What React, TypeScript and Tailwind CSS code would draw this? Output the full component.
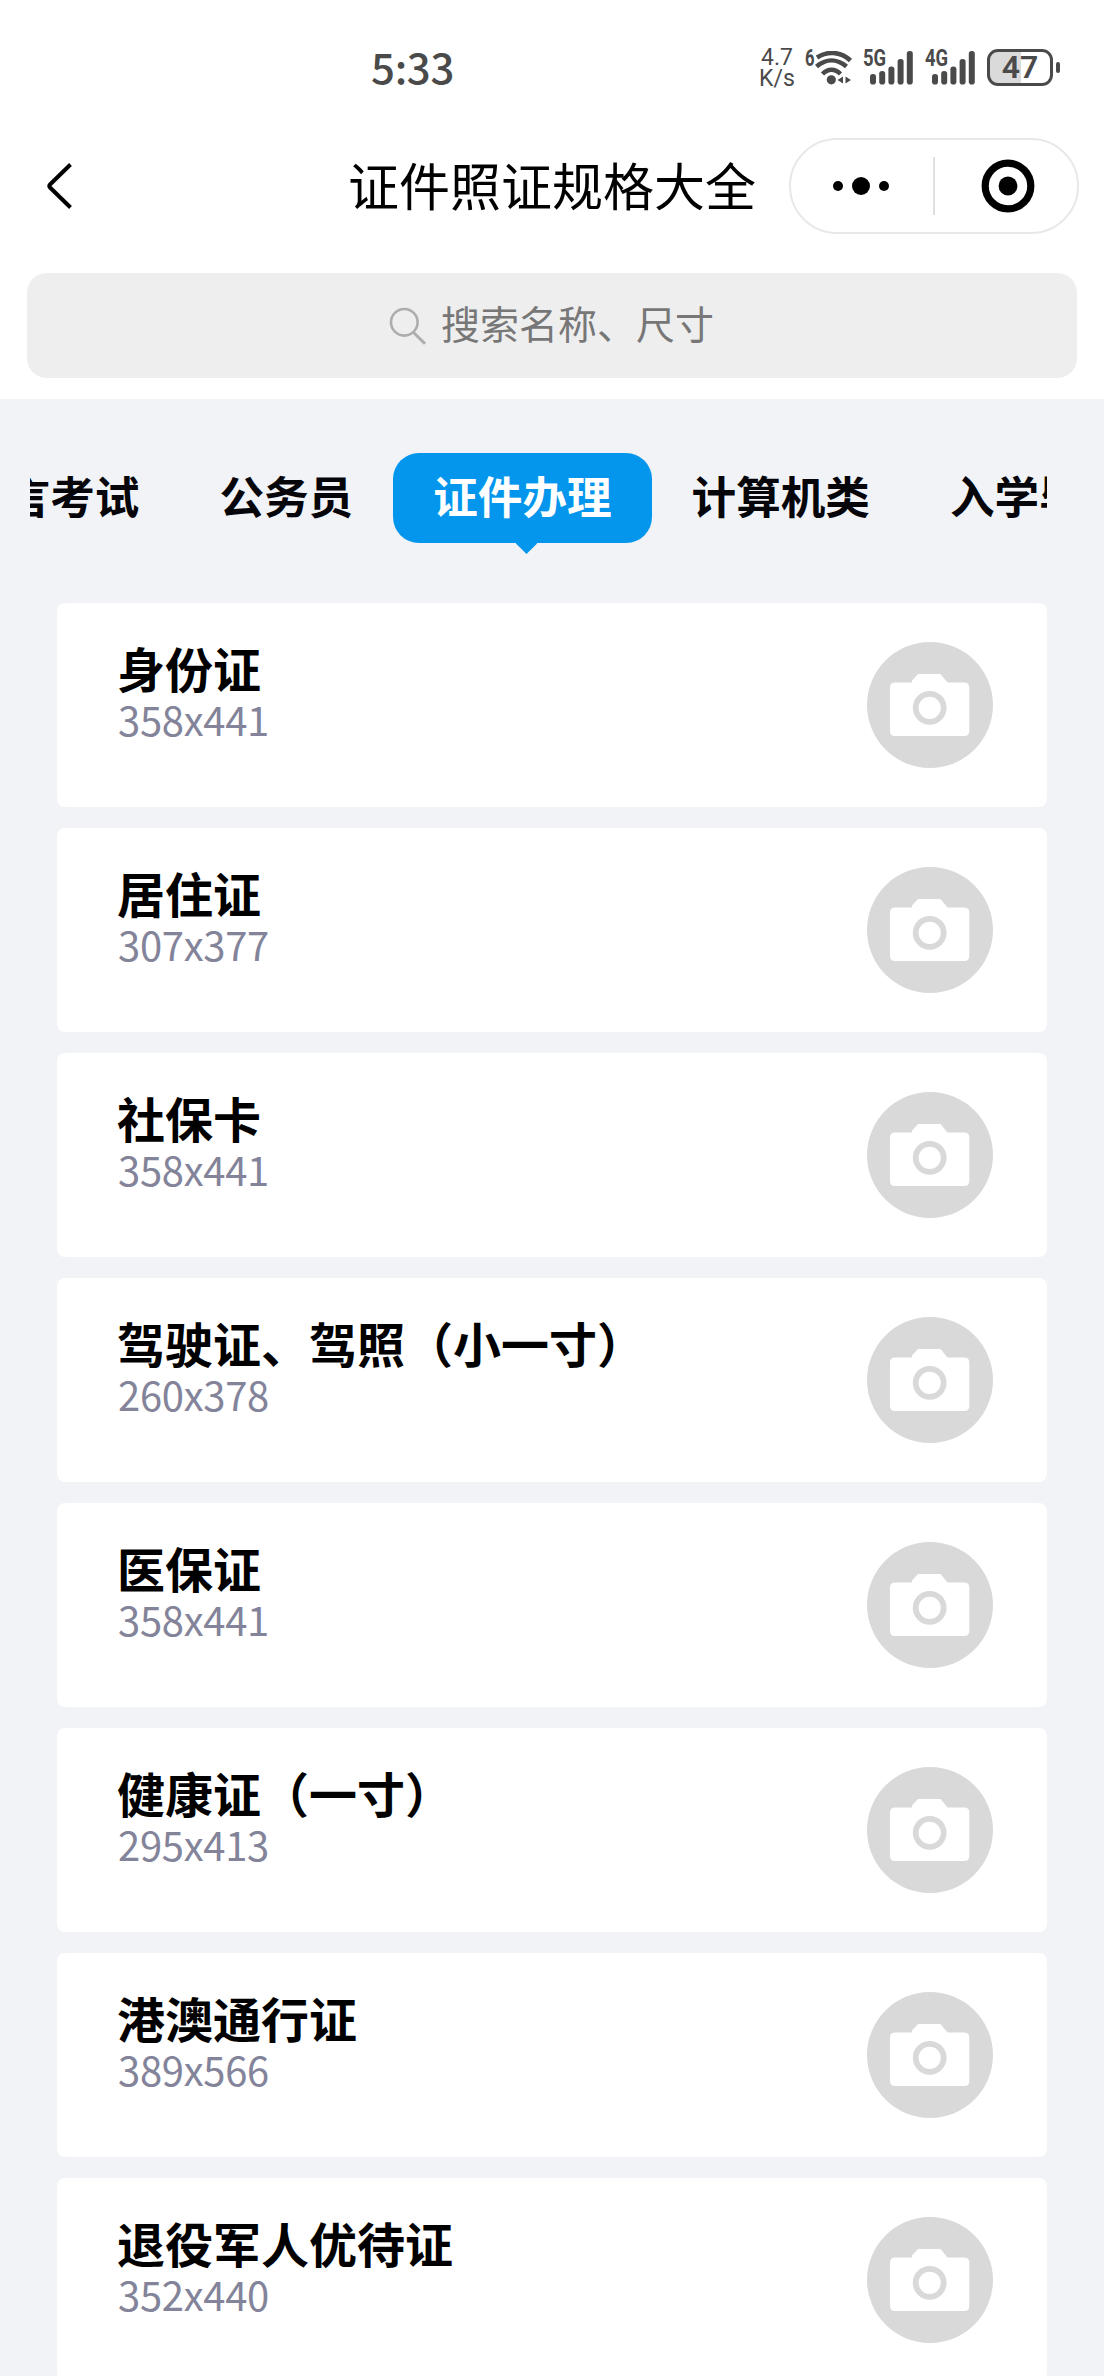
import clsx from 'clsx';

const tabs = ['语言考试', '公务员', '证件办理', '计算机类', '入学毕业'];
const activeTab = '证件办理';

const specs = [
  { name: '身份证', size: '358x441' },
  { name: '居住证', size: '307x377' },
  { name: '社保卡', size: '358x441' },
  { name: '驾驶证、驾照（小一寸）', size: '260x378' },
  { name: '医保证', size: '358x441' },
  { name: '健康证（一寸）', size: '295x413' },
  { name: '港澳通行证', size: '389x566' },
  { name: '退役军人优待证', size: '352x440' },
];

function WifiIcon() {
  return (
    <div className="relative ml-[13px] h-[34px] w-[48px]">
      <span className="absolute -top-px left-0 origin-left scale-x-[0.72] font-[family-name:Roboto] text-[23px] leading-[18px] font-bold">6</span>
      <svg className="absolute top-0 left-[10px]" width="38" height="34" viewBox="0 0 38 34" fill="none">
        <path d="M2 6.500C12 0 25 0 35.500 9.500" stroke="#4a4a4a" strokeWidth="4.600" />
        <path d="M1.500 15.500C11 7.500 22 7.500 31.500 15.500" stroke="#4a4a4a" strokeWidth="4.600" />
        <path d="M7.500 23C13 17.300 20 17.300 25.500 23" stroke="#4a4a4a" strokeWidth="4.600" />
        <circle cx="16.300" cy="28.800" r="4.600" fill="#4a4a4a" />
        <path d="M28 25.500V32.500L22.500 29ZM30.500 25.500V32.500L36 29Z" fill="#4a4a4a" />
      </svg>
    </div>
  );
}

function SignalIcon({ label, className }: { label: string; className?: string }) {
  return (
    <div className={clsx('relative h-[34px] w-[50px]', className)}>
      <span className="absolute -top-px left-0 origin-left scale-x-[0.8] font-[family-name:Roboto] text-[23px] leading-[18px] font-bold">{label}</span>
      <svg className="absolute top-0 left-[7px]" width="43" height="34" viewBox="0 0 43 34" fill="#4a4a4a">
        <rect x="0" y="23" width="6" height="10.500" rx="2.800" />
        <rect x="9.200" y="20" width="6" height="13.500" rx="2.800" />
        <rect x="18.400" y="15.500" width="6" height="18" rx="2.800" />
        <rect x="27.600" y="8" width="6" height="25.500" rx="2.800" />
        <rect x="36.800" y="0" width="6" height="33.500" rx="2.800" />
      </svg>
    </div>
  );
}

function StatusBar() {
  return (
    <div className="flex h-[110px] items-start text-[#4a4a4a]">
      <span className="mt-[44px] ml-[371px] w-[389px] text-[42px] leading-[44px] font-medium tracking-[-0.3px]">5:33</span>
      <div className="mt-[48px] w-[35px] font-[family-name:Roboto] text-[23px] leading-[20.500px]">
        <div className="pl-px">4.7</div>
        <div className="-ml-px">K/s</div>
      </div>
      <div className="mt-[51px] -ml-[3px] flex">
        <WifiIcon />
        <SignalIcon label="5G" className="ml-[10px]" />
        <SignalIcon label="4G" className="ml-[12px]" />
      </div>
      <div className="mt-[49px] ml-[12px] flex items-center">
        <div className="flex h-[37px] w-[66px] items-center justify-center rounded-[11px] border-[3px] border-[#4a4a4a] bg-linear-to-r from-[#dadada] from-52% to-white to-52% pb-px font-[family-name:Roboto] text-[32px] leading-none font-semibold">
          47
        </div>
        <div className="ml-[3px] h-[11px] w-[4px] rounded-full bg-[#4a4a4a]" />
      </div>
    </div>
  );
}

function NavBar() {
  return (
    <div className="flex h-[163px] items-start">
      <svg className="mt-[52px] ml-[46px]" width="28" height="48" viewBox="0 0 28 48" fill="none" stroke="black" strokeWidth="4">
        <path d="M24.500 2.500L4 22.500Q2.500 24 4 25.500L24.500 45.500" />
      </svg>
      <h1 className="mt-[44px] ml-[274px] w-[441px] text-[51px] leading-[60px] whitespace-nowrap">证件照证规格大全</h1>
      <div className="mt-[28px] flex h-[96px] w-[290px] items-center rounded-full border-2 border-[#e8e8e8]">
        <svg className="ml-[42px]" width="56" height="20" viewBox="0 0 56 20">
          <circle cx="5" cy="10" r="5" />
          <circle cx="28" cy="10" r="9" />
          <circle cx="51" cy="10" r="5" />
        </svg>
        <div className="ml-[44px] h-[58px] w-[2px] bg-[#e0e0e0]" />
        <svg className="ml-[46px]" width="54" height="54" viewBox="0 0 54 54">
          <circle cx="27" cy="27" r="22.800" fill="none" stroke="black" strokeWidth="7.200" />
          <circle cx="27" cy="27" r="9.400" />
        </svg>
      </div>
    </div>
  );
}

function SearchBox() {
  return (
    <div className="mx-[27px] flex h-[105px] items-center rounded-[20px] bg-[#eeeeee]">
      <svg className="ml-[362px]" width="38" height="38" viewBox="0 0 38 38" fill="none" stroke="#adadad" strokeWidth="2.600">
        <circle cx="15.300" cy="15.300" r="13.300" />
        <path d="M24.500 25.500L36 36.800" strokeWidth="3" />
      </svg>
      <span className="-mt-[8px] ml-[14px] text-[39px] leading-[50px] text-[#777777]">搜索名称、尺寸</span>
    </div>
  );
}

function Tabs() {
  return (
    <div className="mx-[30px] mt-[54px] flex h-[102px] w-[1017px] shrink-0 overflow-hidden">
      {tabs.map((tab, i) => (
        <div
          key={tab}
          className={clsx(
            'relative flex h-[90px] shrink-0 items-center rounded-[26px] px-[40px] text-[44.6px] leading-none font-bold',
            i === 0 && '-ml-[109px]',
            tab === activeTab ? 'bg-[#0396ec] text-white' : 'text-[#05050a]',
          )}
        >
          <span className="-mt-[5px]">{tab}</span>
          {tab === activeTab && (
            <div className="absolute -bottom-[8px] left-[126px] h-[15px] w-[15px] rotate-45 bg-[#0396ec]" />
          )}
        </div>
      ))}
    </div>
  );
}

function CameraIcon() {
  return (
    <svg width="126" height="126" viewBox="0 0 126 126">
      <circle cx="63" cy="63" r="63" fill="#d9d9d9" />
      <path
        d="M28 40.500H45V38.500L51 32H73.500L80.500 40.500H97Q102.300 40.500 102.300 45.500V89Q102.300 94 97.300 94H28Q23 94 23 89V45.500Q23 40.500 28 40.500Z"
        fill="white"
      />
      <circle cx="62.700" cy="65.800" r="14" fill="none" stroke="#d9d9d9" strokeWidth="5.800" />
    </svg>
  );
}

function SpecCard({ name, size }: { name: string; size: string }) {
  return (
    <div className="flex h-[204px] shrink-0 items-start justify-between rounded-[8px] bg-white pr-[54px] pl-[60px]">
      <div className="pt-[35px]">
        <div className="text-[48px] leading-[58px] font-bold text-black">{name}</div>
        <div className="pl-px text-[40px] leading-[46px] tracking-[-0.3px] text-[#83849a]">{size}</div>
      </div>
      <div className="pt-[39px]">
        <CameraIcon />
      </div>
    </div>
  );
}

export default function App() {
  return (
    <div className="flex h-[2376px] w-[1104px] flex-col overflow-hidden bg-[#f1f3f7] font-['Noto_Sans_CJK_SC',sans-serif]">
      {/* Header */}
      <header className="h-[399px] shrink-0 bg-white">
        <StatusBar />
        <NavBar />
        <SearchBox />
      </header>

      <Tabs />

      {/* Spec list */}
      <main className="mx-[57px] mt-[48px] flex w-[990px] shrink-0 flex-col gap-[21px]">
        {specs.map((spec) => (
          <SpecCard key={spec.name} name={spec.name} size={spec.size} />
        ))}
      </main>
    </div>
  );
}
